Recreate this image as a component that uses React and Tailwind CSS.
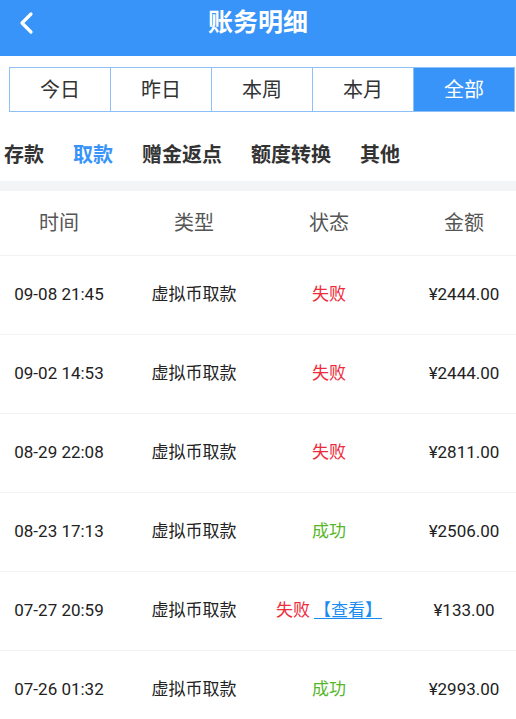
import React from 'react';

const TABS = ['今日', '昨日', '本周', '本月', '全部'];
const CATS = ['存款', '取款', '赠金返点', '额度转换', '其他'];

const ROWS = [
  { time: '09-08 21:45', type: '虚拟币取款', ok: false, amount: '¥2444.00' },
  { time: '09-02 14:53', type: '虚拟币取款', ok: false, amount: '¥2444.00' },
  { time: '08-29 22:08', type: '虚拟币取款', ok: false, amount: '¥2811.00' },
  { time: '08-23 17:13', type: '虚拟币取款', ok: true, amount: '¥2506.00' },
  { time: '07-27 20:59', type: '虚拟币取款', ok: false, view: true, amount: '¥133.00' },
  { time: '07-26 01:32', type: '虚拟币取款', ok: true, amount: '¥2993.00' },
];

const FONT = { fontFamily: 'Roboto, "Noto Sans CJK SC", sans-serif' };

// ─── Row of the ledger table ────────────────────────────────────────────────
function Row({ row }) {
  return (
    <div className="grid grid-cols-[118px_152px_118px_128px] h-[79px] items-center border-b border-[#f2f2f2] text-[17px] text-[#222]">
      <div className="text-center">{row.time}</div>
      <div className="text-center">{row.type}</div>
      <div className="text-center whitespace-nowrap">
        {row.ok ? (
          <span className="text-[#56b62a]">成功</span>
        ) : (
          <span className="text-[#ee2b3b]">失败</span>
        )}
        {row.view && <span className="ml-1 text-[#1a8cf0] underline underline-offset-2">【查看】</span>}
      </div>
      <div className="pl-6 text-center">{row.amount}</div>
    </div>
  );
}

export default function App() {
  return (
    <div className="w-[516px] h-[719px] overflow-hidden bg-white" style={FONT}>
      {/* ── Top bar ─────────────────────────────────────────── */}
      <div className="relative h-[56px] bg-[#3894f8] flex items-start justify-center">
        <button className="absolute left-[16px] top-[10px] w-[20px] h-[26px] flex items-center justify-center">
          <svg width="16" height="24" viewBox="0 0 16 24" fill="none">
            <path d="M13 3 L4 12 L13 21" stroke="white" strokeWidth="3.2" strokeLinecap="round" strokeLinejoin="round" />
          </svg>
        </button>
        <h1 className="mt-[7px] text-[25px] leading-[32px] font-bold text-white">账务明细</h1>
      </div>

      {/* ── Period tabs ─────────────────────────────────────── */}
      <div className="mt-[11px] ml-[9px] mr-[1px] h-[45px] flex border border-[#8dc0f7]">
        {TABS.map((t, i) => (
          <div
            key={t}
            className={`flex-1 flex items-center justify-center text-[20px] ${i > 0 ? 'border-l border-[#8dc0f7]' : ''} ${
              i === TABS.length - 1 ? 'bg-[#3894f8] text-white' : 'text-[#333]'
            }`}
          >
            {t}
          </div>
        ))}
      </div>

      {/* ── Category row ────────────────────────────────────── */}
      <div className="h-[69px] pt-[31px] pl-[4px] flex gap-[29px] text-[20px] leading-[24px] font-bold">
        {CATS.map((c, i) => (
          <span key={c} className={i === 1 ? 'text-[#3894f8]' : 'text-[#333]'}>
            {c}
          </span>
        ))}
      </div>

      <div className="h-[10px] bg-[#f3f4f6]" />

      {/* ── Table header ────────────────────────────────────── */}
      <div className="grid grid-cols-[118px_152px_118px_128px] h-[65px] items-center border-b border-[#f2f2f2] text-[20px] text-[#555]">
        <div className="text-center">时间</div>
        <div className="text-center">类型</div>
        <div className="text-center">状态</div>
        <div className="pl-6 text-center">金额</div>
      </div>

      {ROWS.map((r, i) => (
        <Row key={i} row={r} />
      ))}
    </div>
  );
}
